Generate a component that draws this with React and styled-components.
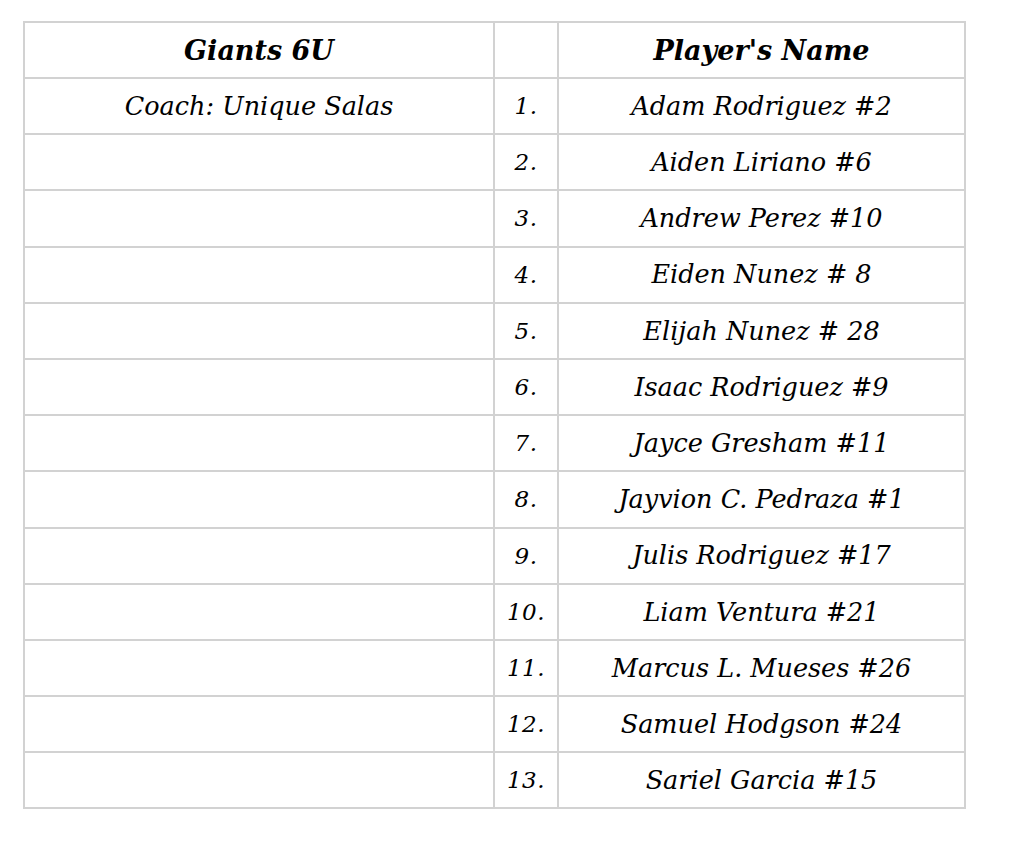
import React from "react";
import styled, { createGlobalStyle } from "styled-components";

const Global = createGlobalStyle`
  html, body { margin: 0; padding: 0; background: #fff; }
  body { font-family: "DejaVu Serif", "Liberation Serif", serif; color: #000; }
`;

const Page = styled.div`
  padding: 21px 0 0 23px;
`;

const Table = styled.table`
  border-collapse: collapse;
  table-layout: fixed;
  width: 941px;
  border: 2px solid #d2d2d2;
`;

const Col = styled.col`
  width: ${(p) => p.$w}px;
`;

const Row = styled.tr`
  height: ${(p) => (p.$head ? 56 : 56.2)}px;
`;

const Cell = styled.td`
  border: 2px solid #d2d2d2;
  padding: 1px 4px 0;
  text-align: center;
  vertical-align: middle;
  font-style: italic;
  font-size: ${(p) => (p.$head ? 27 : p.$num ? 23 : 25.5)}px;
  font-weight: ${(p) => (p.$head ? 700 : 400)};
  white-space: nowrap;
  line-height: 1;
  letter-spacing: ${(p) => (p.$num ? "0.5px" : "0")};
`;

const players = [
  "Adam Rodriguez #2",
  "Aiden Liriano #6",
  "Andrew Perez #10",
  "Eiden Nunez # 8",
  "Elijah Nunez # 28",
  "Isaac Rodriguez #9",
  "Jayce Gresham #11",
  "Jayvion C. Pedraza #1",
  "Julis Rodriguez #17",
  "Liam Ventura #21",
  "Marcus L. Mueses #26",
  "Samuel Hodgson #24",
  "Sariel Garcia #15",
];

export default function App() {
  return (
    <Page>
      <Global />
      <Table>
        <colgroup>
          <Col $w={470} />
          <Col $w={64} />
          <Col $w={407} />
        </colgroup>
        <tbody>
          <Row $head>
            <Cell $head>Giants 6U</Cell>
            <Cell $head></Cell>
            <Cell $head>Player's Name</Cell>
          </Row>
          {players.map((name, i) => (
            <Row key={name}>
              <Cell>{i === 0 ? "Coach: Unique Salas" : ""}</Cell>
              <Cell $num>{i + 1}.</Cell>
              <Cell>{name}</Cell>
            </Row>
          ))}
        </tbody>
      </Table>
    </Page>
  );
}
